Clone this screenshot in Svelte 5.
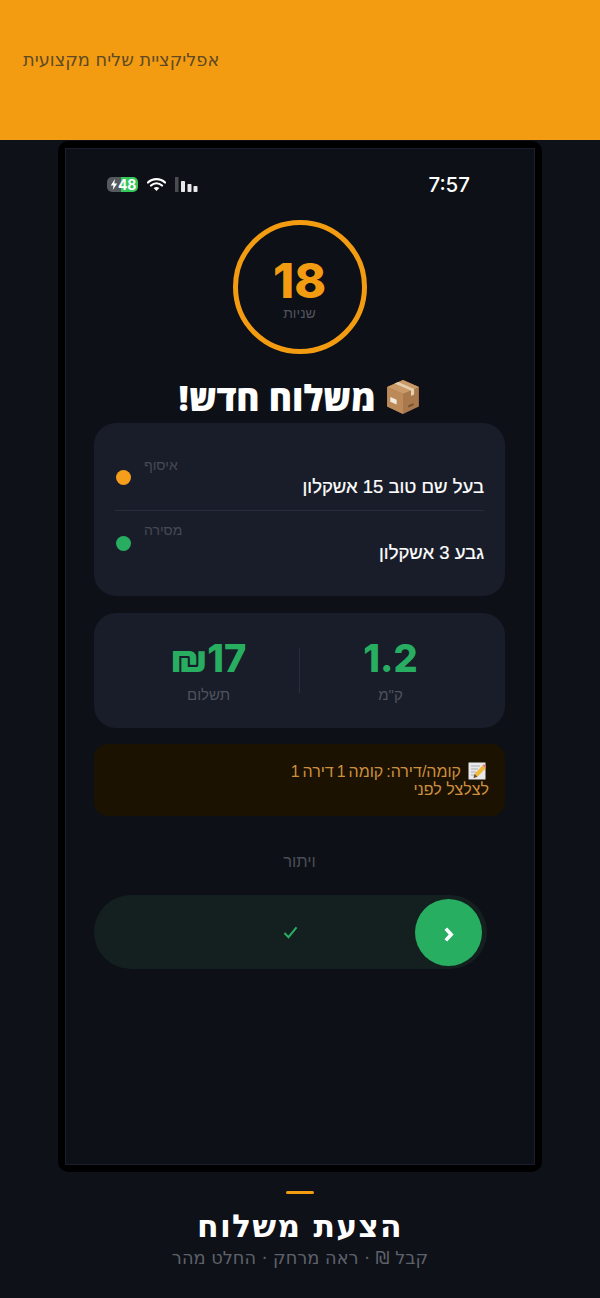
<script>
  const stops = [
    { label: 'איסוף', address: 'בעל שם טוב 15 אשקלון', tone: 'amber' },
    { label: 'מסירה', address: 'גבע 3 אשקלון', tone: 'green' }
  ];
</script>

<div class="page" dir="rtl">
  <header class="banner">
    <p>אפליקציית שליח מקצועית</p>
  </header>

  <div class="frame">
    <main class="screen">
      <div class="status" dir="ltr">
        <div class="indicators">
          <span class="battery">
            <svg class="bolt" viewBox="0 0 8 12" width="8" height="11"><path d="M5 0 0.5 7H3.5L2.6 12 7.5 4.8H4.4Z" fill="#fff"/></svg>
            <span class="charge">48</span>
          </span>
          <svg class="wifi" viewBox="0 0 20 15" width="19" height="15">
            <path d="M1 5.4C6 .6 14 .6 19 5.4M4.2 8.6C7.6 5.4 12.4 5.4 15.8 8.6" fill="none" stroke="#fff" stroke-width="2.3" stroke-linecap="round"/>
            <path d="M7 11.2C8.9 9.7 11.1 9.7 13 11.2L10 14.4Z" fill="#fff"/>
          </svg>
          <svg class="signal" viewBox="0 0 23 15" width="23" height="15">
            <rect x="0" y="0" width="3.5" height="15" fill="#4a4c50"/>
            <rect x="6" y="4" width="4" height="11" rx=".8" fill="#e8e8ea"/>
            <rect x="12.5" y="7" width="4" height="8" rx=".8" fill="#e8e8ea"/>
            <rect x="18.5" y="9" width="4" height="6" rx=".8" fill="#e8e8ea"/>
          </svg>
        </div>
        <span class="clock">7:57</span>
      </div>

      <div class="timer">
        <strong>18</strong>
        <span>שניות</span>
      </div>

      <h1>
        <svg class="parcel" viewBox="0 0 34 34" width="36" height="36">
          <path d="M17 1 32 7.5V26L17 33 2 26V7.5Z" fill="#a9794d"/>
          <path d="M17 1 32 7.5 17 14 2 7.5Z" fill="#c99a68"/>
          <path d="M17 14V33L2 26V7.5Z" fill="#bb8a58"/>
          <path d="M9 4.2 24.5 10.8V16L27.5 14.6V9.4L12.5 2.8Z" fill="#e6cfae"/>
          <path d="M5 17 11 19.6V24L5 21.4Z" fill="#f1eadf"/>
          <path d="M22 25 27 22.8V24.6L22 26.8Z" fill="#6f4c2c"/>
        </svg>
        <span>משלוח חדש!</span>
      </h1>

      <section class="card route">
        {#each stops as stop}
          <div class="stop">
            <div class="stop-text">
              <span class="stop-label">{stop.label}</span>
              <span class="stop-address">{stop.address}</span>
            </div>
            <i class="dot {stop.tone}"></i>
          </div>
        {/each}
      </section>

      <section class="card stats">
        <div class="stat">
          <b>1.2</b>
          <span>ק"מ</span>
        </div>
        <i class="divider"></i>
        <div class="stat">
          <b dir="ltr">₪17</b>
          <span>תשלום</span>
        </div>
      </section>

      <section class="note">
        <p class="floor">
          <svg class="memo" viewBox="0 0 18 18" width="18" height="18">
            <rect x="0.5" y="0.5" width="17" height="17" fill="#e9e9ec"/>
            <path d="M3 4H12M3 7H10M3 10H8M3 13H6" stroke="#a3a6b0" stroke-width=".9"/>
            <path d="M5.5 16 6.5 12 14.5 3.5 17.5 6.5 9.5 14.8Z" fill="#f1b93a"/>
            <path d="M14.5 3.5 16 2 18 4.5 17.5 6.5Z" fill="#e27d74"/>
            <path d="M5.5 16 6.5 12 9.5 14.8Z" fill="#5f5140"/>
          </svg>
          קומה/דירה: קומה 1 דירה 1
        </p>
        <p>לצלצל לפני</p>
      </section>

      <button class="skip" type="button">ויתור</button>

      <div class="slider" dir="ltr">
        <svg class="check" viewBox="0 0 16 14" width="15" height="13"><path d="M1.5 7.5 5.8 12 14.5 1.5" fill="none" stroke="#27ae60" stroke-width="2.2"/></svg>
        <span class="knob">
          <svg viewBox="0 0 10 14" width="11" height="15"><path d="M2.5 1.5 7.5 7 2.5 12.5" fill="none" stroke="#fff" stroke-width="3.4"/></svg>
        </span>
      </div>
    </main>
  </div>

  <footer class="caption">
    <i class="rule"></i>
    <h2>הצעת משלוח</h2>
    <p>קבל ₪ · ראה מרחק · החלט מהר</p>
  </footer>
</div>

<style>
  :global(body) {
    margin: 0;
    background: #0d1017;
  }

  .page {
    width: 600px;
    height: 1298px;
    overflow: hidden;
    display: flex;
    flex-direction: column;
    align-items: center;
    background: #0e1118;
    font-family: "Liberation Sans", sans-serif;
  }

  .banner {
    align-self: stretch;
    height: 140px;
    flex: none;
    display: flex;
    justify-content: flex-end;
    align-items: flex-start;
    background: #f39c12;
  }

  .banner p {
    margin: 51px 0 0 23px;
    width: max-content;
    font: 17.8px/18px "DejaVu Sans", sans-serif;
    color: #5e4a24;
  }

  .frame {
    flex: none;
    margin-top: 1px;
    width: 484px;
    height: 1031px;
    box-sizing: border-box;
    padding: 7px;
    background: #000;
    border-radius: 10px;
  }

  .screen {
    height: 100%;
    box-sizing: border-box;
    padding: 0 29px 0 28px;
    display: flex;
    flex-direction: column;
    align-items: stretch;
    background: #0d1017;
    border: 1px solid #1a1d2c;
  }

  .status {
    display: flex;
    justify-content: space-between;
    align-items: center;
    height: 20px;
    margin: 25px 35px 0 13px;
  }

  .indicators {
    display: flex;
    align-items: center;
    gap: 8px;
  }

  .battery {
    display: inline-flex;
    align-items: center;
    width: 31px;
    height: 15px;
    padding-left: 3px;
    box-sizing: border-box;
    border-radius: 5px;
    overflow: hidden;
    background: linear-gradient(90deg, #55585c 0 44%, #34c759 44%);
  }

  .charge {
    font: 700 14px/15px "Inter", sans-serif;
    letter-spacing: -0.3px;
    color: #fff;
  }

  .wifi { margin-left: 1px; margin-right: 1px; }

  .clock {
    margin-top: 2px;
    font: 500 20.5px/20px "Inter", sans-serif;
    color: #fff;
  }

  .timer {
    align-self: center;
    width: 134px;
    height: 134px;
    margin-top: 26px;
    box-sizing: border-box;
    border: 5px solid #f39c12;
    border-radius: 50%;
    display: flex;
    flex-direction: column;
    align-items: center;
    padding-top: 35px;
  }

  .timer strong {
    font: 800 48px/42px "Inter", sans-serif;
    color: #f39c12;
  }

  .timer span {
    font-size: 14px;
    line-height: 18px;
    margin-top: 2px;
    color: #50535b;
  }

  h1 {
    margin: 24px 0 0;
    height: 38px;
    display: flex;
    justify-content: center;
    align-items: center;
    gap: 9px;
    font: 800 35.4px/38px "Open Sans", sans-serif;
    color: #fff;
  }

  .card {
    background: #191d2a;
    border-radius: 22px;
  }

  .route {
    margin-top: 7px;
    height: 173px;
    box-sizing: border-box;
    padding: 21px 21px 0 21px;
  }

  .stop {
    height: 66px;
    display: flex;
    align-items: center;
    justify-content: space-between;
  }

  .stop + .stop {
    height: 65px;
    border-top: 1px solid #272b3a;
  }

  .stop-text {
    flex: 1;
    display: flex;
    flex-direction: column;
  }

  .stop-label {
    margin-top: 2px;
    font-size: 14px;
    line-height: 15px;
    margin-right: auto;
    margin-left: 13px;
    color: #464952;
  }

  .stop-address {
    margin-top: 3px;
    font-size: 18.5px;
    line-height: 22px;
    -webkit-text-stroke: 0.2px #fff;
    color: #fff;
  }

  .stop + .stop .stop-label { margin-top: 0; }
  .stop + .stop .stop-address { margin-top: 4px; }

  .dot {
    width: 15px;
    height: 15px;
    margin-left: 1px;
    border-radius: 50%;
  }

  .dot.amber { background: #f59e1b; }
  .dot.green { background: #27ae60; }

  .stats {
    margin-top: 17px;
    height: 115px;
    padding: 0 24px;
    display: flex;
    align-items: center;
  }

  .stat {
    flex: 1;
    display: flex;
    flex-direction: column;
    align-items: center;
  }

  .stat b {
    font: 800 38px/40px "Inter", sans-serif;
    color: #27ae60;
  }

  .stat span {
    margin-top: 8px;
    font-size: 15px;
    line-height: 18px;
    color: #4f525c;
  }

  .divider {
    width: 1px;
    height: 45px;
    background: #2a2e3c;
  }

  .note {
    margin-top: 16px;
    height: 72px;
    box-sizing: border-box;
    padding: 18px 16px 0;
    background: #1b1202;
    border-radius: 14px;
    color: #cf8f3e;
    font-size: 16px;
    line-height: 18px;
  }

  .note p { margin: 0; }

  .floor { word-spacing: -1.5px; }

  .memo {
    vertical-align: -3px;
    margin-left: 4px;
    margin-right: 3px;
  }

  .skip {
    align-self: center;
    margin-top: 35px;
    padding: 0;
    height: 20px;
    border: 0;
    background: none;
    font: 16.5px/20px "Liberation Sans", sans-serif;
    color: #4a4d55;
  }

  .slider {
    position: relative;
    margin: 24px 18px 0 0;
    height: 74px;
    border-radius: 37px;
    background: #13201f;
    display: flex;
    align-items: center;
  }

  .check {
    margin-left: 189px;
  }

  .knob {
    position: absolute;
    right: 5px;
    top: 4px;
    width: 67px;
    height: 67px;
    border-radius: 50%;
    background: #27ae60;
    display: flex;
    align-items: center;
    justify-content: center;
  }

  .knob svg { margin-top: 3px; }

  .caption {
    display: flex;
    flex-direction: column;
    align-items: center;
  }

  .rule {
    width: 28px;
    height: 3px;
    margin-top: 19px;
    border-radius: 2px;
    background: #f39c12;
  }

  h2 {
    margin: 13px 0 0;
    font: 700 31.5px/38px "DejaVu Sans", sans-serif;
    letter-spacing: 1.2px;
    color: #fff;
  }

  .caption p {
    margin: 2px 0 0;
    font: 17.8px/22px "DejaVu Sans", sans-serif;
    color: #5e616a;
  }
</style>
